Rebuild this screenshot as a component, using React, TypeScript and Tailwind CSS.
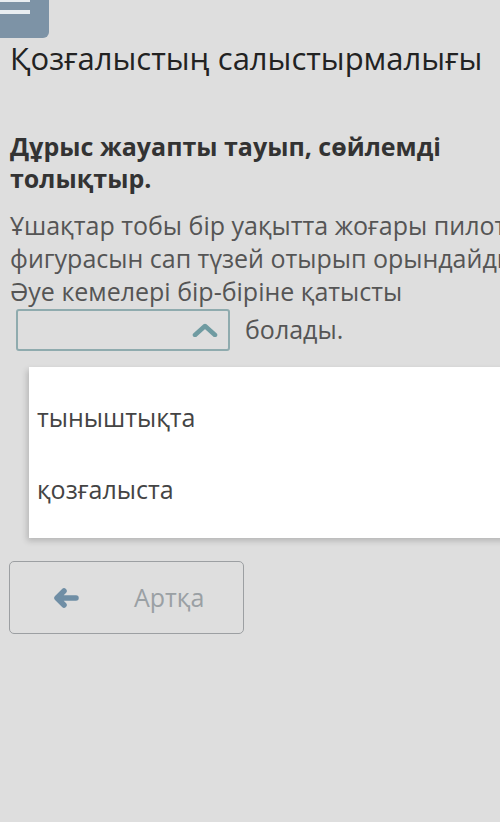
import React from 'react';

const font = { fontFamily: '"Open Sans", "Noto Sans", sans-serif' };

const App: React.FC = () => {
  return (
    <div className="w-[500px] h-[822px] overflow-hidden bg-[#dedede] relative" style={font}>
      {/* menu button */}
      <div className="w-[49px] h-[40px] bg-[#7d93a6] rounded-br-[6px] flex flex-col gap-[8px] -mt-[2px]">
        <div className="h-[4px] w-[30px] bg-[#e8edf1]" />
        <div className="h-[4px] w-[30px] bg-[#e8edf1]" />
      </div>

      <h1 className="pl-[10px] text-[31px] leading-[40px] text-[#222] whitespace-nowrap">
        Қозғалыстың салыстырмалығы
      </h1>

      <h2 className="pl-[10px] mt-[52px] text-[25px] leading-[32px] font-bold text-[#333] w-[470px]">
        Дұрыс жауапты тауып, сөйлемді толықтыр.
      </h2>

      <div className="pl-[10px] mt-[15px] text-[25px] leading-[33px] text-[#555] whitespace-nowrap">
        <div>Ұшақтар тобы бір уақытта жоғары пилотаж</div>
        <div>фигурасын сап түзей отырып орындайды.</div>
        <div>Әуе кемелері бір-біріне қатысты</div>
      </div>

      <div className="flex items-center mt-[1px] pl-[16px]">
        <div className="w-[214px] h-[42px] border-2 border-[#8fabae] rounded-[3px] flex items-center justify-end pr-[10px]">
          <svg width="26" height="14" viewBox="0 0 26 14">
            <path d="M3 12 L13 3 L23 12" fill="none" stroke="#6f9ba1" strokeWidth="4.5" strokeLinecap="round" strokeLinejoin="round" />
          </svg>
        </div>
        <span className="ml-[15px] text-[25px] text-[#555]">болады.</span>
      </div>

      {/* dropdown */}
      <div className="absolute left-[29px] top-[367px] w-[480px] h-[171px] bg-white shadow-[-2px_3px_6px_rgba(0,0,0,0.18)] flex flex-col justify-center gap-[38px] pl-[8px] text-[25px] leading-[34px] text-[#444]">
        <div>тыныштықта</div>
        <div>қозғалыста</div>
      </div>

      <div className="mt-[210px] ml-[9px] w-[235px] h-[73px] border-[1.5px] border-[#9c9fa2] rounded-[5px] flex items-center">
        <svg className="ml-[43px]" width="26" height="20" viewBox="0 0 26 20">
          <path d="M11 3 L4 10 L11 17 M5 10 L23 10" fill="none" stroke="#6f8ea5" strokeWidth="5.5" strokeLinecap="round" strokeLinejoin="round" />
        </svg>
        <span className="ml-[55px] text-[25px] text-[#9aa0a4]">Артқа</span>
      </div>
    </div>
  );
};

export default App;
